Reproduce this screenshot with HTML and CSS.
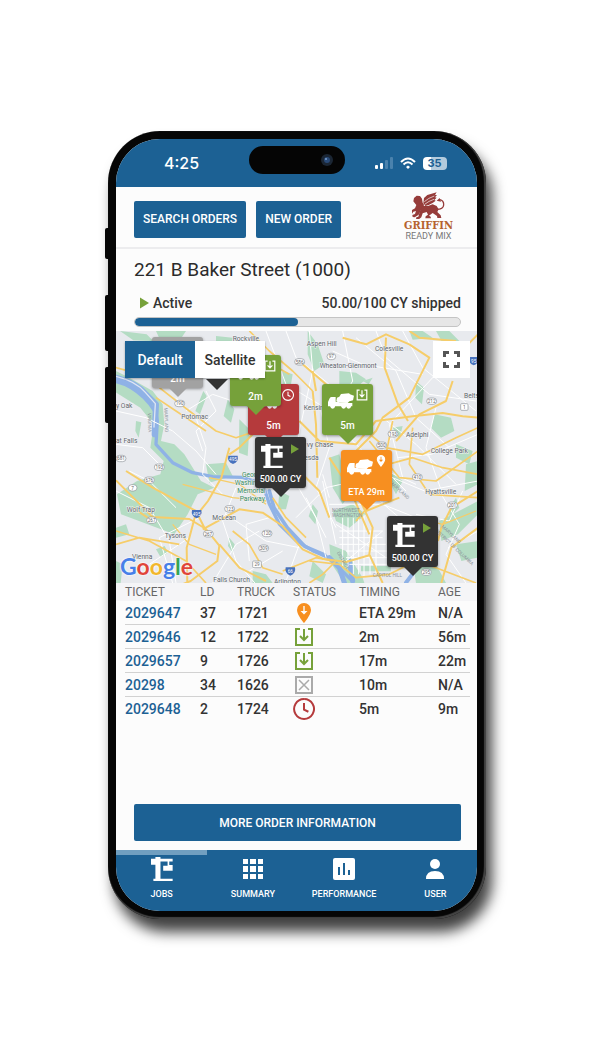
FILE: index.html
```html
<!doctype html>
<html lang="en">
    <head>
        <meta charset="UTF-8" />
        <meta name="viewport" content="width=device-width, initial-scale=1" />
        <title>Griffin Ready Mix - Order</title>
        <link rel="stylesheet" href="styles.css">
    </head>
    <body>
        <!-- Shared icons -->
        <svg class="icon-defs" aria-hidden="true">
            <symbol id="truck" viewBox="0 0 78 46">
                <path d="M0 38V26l5-11q2-4 6-4h12v14h8l4 4h38v10H0z" />
                <path d="M27 13l7-3 5-8 24-2 3 3 12 4-3 14-11 3-5 5-28-1-6-6z" />
                <circle cx="14" cy="39" r="7" />
                <circle cx="47" cy="39" r="7" />
                <circle cx="62" cy="39" r="7" />
            </symbol>
            <symbol id="crane" viewBox="0 0 65 71">
                <path d="M13 0h15v5h36v8H28v51h36v7H7v-7h6V23H0V5h13z" />
                <path d="M49 12h5v12h10v17H36V26h13z" />
            </symbol>
            <symbol id="unload" viewBox="0 0 20 20">
                <path d="M6 2H2v16h16V2h-4M10 2v11M6 9l4 4 4-4" fill="none" stroke="currentColor" stroke-width="2" />
            </symbol>
            <symbol id="clock" viewBox="0 0 20 20">
                <path d="M10 1a9 9 0 1 0 .1 0M10 4.500v6l4 2" fill="none" stroke="currentColor" stroke-width="1.800" />
            </symbol>
            <symbol id="place" viewBox="0 0 20 20">
                <path fill-rule="evenodd" d="M10 0a7 7 0 0 1 7 7c0 5-7 13-7 13S3 12 3 7a7 7 0 0 1 7-7zM9.300 3v5H6.500l3.500 3.500L13.500 8h-2.800V3z" />
            </symbol>
            <symbol id="play" viewBox="0 0 10 12">
                <path d="M0 0l10 6-10 6z" />
            </symbol>
        </svg>

        <main class="phone">
            <span class="side-key key-action"></span>
            <span class="side-key key-up"></span>
            <span class="side-key key-down"></span>
            <div class="screen">
                <div class="status-bar">
                    <span class="time">4:25</span>
                    <span class="island">
                        <svg width="14" height="14" viewBox="0 0 14 14">
                            <circle cx="7" cy="7" r="6" fill="#1b2634" />
                            <circle cx="7" cy="7" r="3" fill="#294a78" />
                            <circle cx="6" cy="6" r="1" fill="#7da0cc" />
                        </svg>
                    </span>
                    <span class="indicators">
                        <svg width="18" height="12" viewBox="0 0 18 12">
                            <rect x="0" y="8" width="3" height="4" rx="1" fill="#fff" />
                            <rect x="5" y="6" width="3" height="6" rx="1" fill="#fff" />
                            <rect x="10" y="3" width="3" height="9" rx="1" fill="#4a82ad" />
                            <rect x="15" y="0" width="3" height="12" rx="1" fill="#4a82ad" />
                        </svg>
                        <svg width="16" height="12" viewBox="0 0 16 12" fill="none" stroke="#fff" stroke-width="2">
                            <path d="M1 5q7-7 14 0M3.500 7.500q4.500-4.500 9 0" />
                            <path d="M8 8.500l2 1.500-2 2-2-2z" fill="#fff" stroke="none" />
                        </svg>
                        <span class="battery">35</span>
                    </span>
                </div>

                <header class="toolbar">
                    <button class="btn">SEARCH ORDERS</button>
                    <button class="btn">NEW ORDER</button>
                    <div class="brand">
                        <svg width="33" height="27" viewBox="0 0 99 81" fill="#963c3a">
                            <path d="M4 28l2-10 8-7 10 1 6 8 2 12 4 6-2 10-8 8-6 12-12 8-6-1-1-6 8-3 3-9-8 2-5 8-5-3 3-8 12-7 4-10-5-6z" />
                            <path d="M34 34l2-16 10-9 28-8-5 8h6l-6 7 5 1-7 7 4 2-8 6-13 7-10 3z" />
                            <path d="M32 42l16 0 14-5 12 5 6 10-4 8 10 10 2 8H76l-1-6-13-9-11 8 5 3 1 5H40l1-6 7-5-4-8-12 4-4 12-9 7-7-1 1-6 6-2 4-14z" />
                            <path d="M74 52q20 0 21-13T83 23" stroke="#963c3a" stroke-width="4" fill="none" />
                            <path d="M74 26l9-8 4 11z" />
                            <path d="M37 29q12-11 30-17M38 37q12-10 28-15" stroke="#fcfcfc" stroke-width="2" fill="none" />
                        </svg>
                        <span class="brand-name">GRIFFIN</span>
                        <span class="brand-sub">READY MIX</span>
                    </div>
                </header>

                <section class="order">
                    <h1>221 B Baker Street (1000)</h1>
                    <div class="order-state">
                        <span class="active"><svg class="play" width="9" height="12"><use href="#play" /></svg>Active</span>
                        <span>50.00/100 CY shipped</span>
                    </div>
                    <div class="progress"><div class="progress-fill" style="width: 50%"></div></div>
                </section>

                <section class="map">
                    <svg class="map-canvas" viewBox="0 0 1086 756" preserveAspectRatio="xMinYMin slice">
                        <rect width="1300" height="756" fill="#e8eaee" />
                        <!-- Parks -->
                        <g fill="#b4dcc3">
                            <path d="M0 120l40 20 70 40 30 40 5 60-10 50 40 10 30 30 50 80 40 20-50 20-30 60-40 60-80-30-80-30-12-60 60-40 70-20 10-40-40-40 10-70-40-50-80-50z" />
                            <path d="M12 0l80 10 20 20-60-2zM120 0h90l-20 30-60-8zM300 15l50 5-10 60-40-30zM500 120l30 10-10 60-20-20zM575 0l30 40 20 60-30 20-20-50zM670 120l50 5 30 20-30 25-50-10z" />
                            <path d="M335 205l20 30-10 40-22-20zM370 265l30 30-5 80-26-10zM262 180l10 15-20 55-14-10zM270 400l60-5 20 40-70 20z" />
                            <path d="M640 380l30-10 30 120-20 30-30-50zM650 540l60-20 40 30-50 40-40-20zM490 480l30 15-10 40-24 0zM590 520l16 20-8 40-20-24z" />
                            <path d="M955 250l50 10 10 40-40 20-30-30zM1020 340l50 20-10 40-40-20zM830 290l30-5-10 40zM820 420l40 30-20 40-16-30zM880 0l40 0 30 20-60 6zM960 0h40l30 30-50 6zM900 150l24 20-6 50-20-20z" />
                            <path d="M1050 400l36-10v70l-40 20zM970 570l40-20 76-40v40l-60 60-50 20zM1020 640l66-10v50l-50 10zM640 640l50 20 50 80 5 16h-60l-40-60zM735 705h90v16h-90zM110 540l40 10 30-10-10 20zM120 655l26-10 10 20-22 14zM340 620l16 20-6 25-14-20zM890 690l60-10 40 76h-90zM0 590l30-10 10 30-40 10zM60 270l16 4-8 46-10-20zM0 690l20 10-6 56H0z" />
                            <path d="M590 690l40 40-10 26-40-20zM410 720l40 10 20 26h-60zM1000 560l30-30-10-30-20 30zM740 150l30-10-12 20zM620 200l30-10 0 40-24-10z" />
                        </g>
                        <!-- River -->
                        <g fill="none" stroke="#8fb2e6" stroke-linejoin="round" stroke-linecap="round">
                            <path d="M-6 150q50 10 90 50t40 70l-4 70 50 55 60 30 60 12 90 2 60 20 20 60 30 60 50 50 50 30 50 22 40 40 30 30" stroke-width="10" />
                            <path d="M0 140q60 15 90 50l30 30-4 90" stroke-width="18" />
                            <path d="M0 136q60 15 88 48l30 34-4 70" stroke="#dfe6f3" stroke-width="4" />
                            <path d="M460 480l14 50 40 60 52 56 60 26" stroke-width="11" />
                            <path d="M640 680l30 30 20 60M700 690l10 60" stroke-width="15" />
                            <path d="M690 240l8 14M900 715l-30 40" stroke-width="12" />
                        </g>
                        <!-- Streets -->
                        <g fill="none" stroke="#fff" stroke-width="3">
                            <path d="M0 240l90 20 80 40 70 60 60 70M180 200l60 60 30 90-10 80 60 60M40 420l60 30 80 80M0 480l100 50 60 100 20 126M270 180l30 60-60 60 20 60M210 240l80-50 90 30M0 340l80 10 60 60" />
                            <path d="M510 0l30 80 100 80 60 160 90 90 110 50M450 0l60 160 100 60 30 130-40 120 60 120M580 0l10 120-40 180-20 140 70 120 30 120M650 60l90 40 180 30M680 0l30 150-60 100M720 20l120 100 60 140 100 90" />
                            <path d="M780 0l30 80 130 110 140 20M860 0l60 110 160 130M1000 40l-50 100-130 140 40 160M800 260l100 80 120 120M840 300l-60 90 90 90M1086 310l-140 60-100 10M1086 450l-160 30-120-50M960 230l-30 120 50 140" />
                            <path d="M570 500l60 120M620 450l40 190M540 560l90-90 90-20M360 470l-40 100 40 120 60 70M430 600l-70 40-70 116M330 550l120 80 100 20M250 560l-120 60 40 136M220 620l-120 80M460 560l-70 20 10 110M500 660l-100 60M550 640l-40 110" />
                            <path d="M680 560v150M696 560v150M712 560v170M728 560v170M744 550v190M762 600v130M780 610v120M670 600h130M670 620h130M670 640h140M690 660h130M690 680h130M700 700h130M660 580l150 100M800 600l-110 90" />
                            <path d="M970 480l60 100-40 90 60 86M1040 480l-40 90-100-20M900 560l-100-40-20-90M1086 600l-90 50M780 500l70 60M640 520h160M640 500l-20-70" />
                        </g>
                        <!-- Highways -->
                        <g fill="none" stroke="#f6cd69" stroke-width="6" stroke-linejoin="round">
                            <path d="M-6 108l50 14M130 170l90 70 80 60 60 20 60-20M400 0l60 60 70 60 60 60M350 50l100 40 70 40M270 300l-90-60-60-40" stroke-width="5" />
                            <path d="M340 350l-24 90-40 70-40 50-24 90 2 110M0 448l60 60 50 50 110 6 50 30 40 50-6 46-80 60-50 20M30 420l80 50 130 70 30 60M50 530l60 40" />
                            <path d="M310 640l60 70 80 40M260 595l110-60 70 10 60 40 60 70 60 28 70 10 70-20M420 300l-50 50-30 20" />
                            <path d="M550 270l60 60 110 10 60-70 110-14 90-10 60 10 46 4M590 180l10 100 4 160M590 120l10 60M560 100l70 60 30 80" />
                            <path d="M680 20l70 20 60-30 70 30 60 40-60 120-80 60-20 40-60 60-20 40M880 0l30 20 110 10M810 20l-4 90 40 110 30 50M1010 150l-20 60-80 40-70 80M1086 10l-100 100" />
                            <path d="M750 300l60 50 110 20 100-50 66-30M780 410l110-30 90 30 106 20M830 270l-20 100-30 130-60 70M890 290l-10 110 60 90 146 10M760 330l90 110 110 10 126-90" stroke-width="5" />
                            <path d="M1086 480l-80 50-30 60-10 40M1086 590l-80 60-30 106M720 480l50 110-10 80 40 86M640 380l60 90 60 140M750 540l100-40M550 420l60 60 30 80" />
                            <path d="M580 690l90 10 50 40 100-10 80-40 60 20 120 46M660 690l-40 40-40 26M350 600l50 40 40 70 60 20M0 600l100 30 110 60 60 66M0 640l70-20 120 20M470 500l40 60 60 60M500 720l100-40 50 10" stroke-width="5" />
                            <path d="M280 440l90 20 80 60M200 460l150 40 100 10M170 580l50 60 80 30M840 590l60-30 80 20 100-40" stroke-width="4" />
                        </g>
                        <!-- Route shields -->
                        <g class="shields">
                            <rect x="176" y="208" width="30" height="19" rx="10" /><text x="191" y="223">190</text>
                            <rect x="115" y="399" width="30" height="19" rx="10" /><text x="130" y="414">193</text>
                            <rect x="85" y="438" width="30" height="19" rx="10" /><text x="100" y="453">676</text>
                            <rect x="37" y="461" width="26" height="19" rx="10" /><text x="50" y="476">7</text>
                            <rect x="0" y="373" width="30" height="19" rx="10" /><text x="15" y="388">681</text>
                            <rect x="92" y="558" width="30" height="19" rx="10" /><text x="107" y="573">267</text>
                            <rect x="262" y="599" width="30" height="19" rx="10" /><text x="277" y="614">267</text>
                            <rect x="326" y="524" width="30" height="19" rx="10" /><text x="341" y="539">123</text>
                            <rect x="438" y="598" width="30" height="19" rx="10" /><text x="453" y="613">120</text>
                            <rect x="428" y="642" width="30" height="19" rx="10" /><text x="443" y="657">309</text>
                            <rect x="410" y="690" width="26" height="20" rx="3" /><text x="423" y="706">29</text>
                            <rect x="536" y="83" width="30" height="19" rx="10" /><text x="551" y="98">586</text>
                            <rect x="633" y="67" width="26" height="19" rx="10" /><text x="646" y="82">97</text>
                            <rect x="932" y="201" width="30" height="19" rx="10" /><text x="947" y="216">212</text>
                            <rect x="1034" y="218" width="22" height="20" rx="3" /><text x="1045" y="234">1</text>
                            <rect x="816" y="299" width="30" height="19" rx="10" /><text x="831" y="314">193</text>
                            <rect x="782" y="333" width="30" height="19" rx="10" /><text x="797" y="348">500</text>
                            <rect x="889" y="429" width="30" height="19" rx="10" /><text x="904" y="444">410</text>
                            <rect x="994" y="513" width="30" height="19" rx="10" /><text x="1009" y="528">201</text>
                            <rect x="916" y="714" width="30" height="19" rx="10" /><text x="931" y="729">295</text>
                        </g>
                        <g class="interstates">
                            <path d="M337 374h28q4 18-14 25-18-7-14-25z" /><text x="351" y="391">495</text>
                            <path d="M228 537h28q4 18-14 25-18-7-14-25z" /><text x="242" y="554">495</text>
                            <path d="M509 709h28q4 18-14 25-18-7-14-25z" /><text x="523" y="726">66</text>
                            <path d="M1059 78h28q4 18-14 25-18-7-14-25z" /><text x="1073" y="95">95</text>
                        </g>
                        <!-- Place names -->
                        <g class="places">
                            <text x="350" y="29">Rockville</text>
                            <text x="572" y="45">Aspen Hill</text>
                            <text x="777" y="60">Colesville</text>
                            <text x="611" y="112">Wheaton-Glenmont</text>
                            <text x="1044" y="202">Belts</text>
                            <text x="0" y="232">y Oak</text>
                            <text x="196" y="263">Potomac</text>
                            <text x="0" y="336">at Falls</text>
                            <text x="563" y="237">Kensington</text>
                            <text x="572" y="347">vy Chase</text>
                            <text x="524" y="386">Bethesda</text>
                            <text x="870" y="317">Adelphi</text>
                            <text x="944" y="367">College Park</text>
                            <text x="928" y="489">Hyattsville</text>
                            <text x="32" y="543">Wolf Trap</text>
                            <text x="146" y="622">Tysons</text>
                            <text x="289" y="567">McLean</text>
                            <text x="48" y="685">Vienna</text>
                            <text x="292" y="753">Falls Church</text>
                            <text x="474" y="760">Arlington</text>
                        </g>
                        <g class="places parkway">
                            <text x="378" y="437">George</text>
                            <text x="356" y="461">Washington</text>
                            <text x="364" y="485">Memorial</text>
                            <text x="371" y="509">Parkway</text>
                        </g>
                        <g class="regions">
                            <text x="648" y="543">NORTHWEST</text>
                            <text x="648" y="559">WASHINGTON</text>
                            <text x="770" y="737">CAPITOL HILL</text>
                            <text transform="translate(95 246) rotate(88)">VIRGINIA</text>
                            <text transform="translate(145 230) rotate(88)">MARYLAND</text>
                            <text transform="translate(820 455) rotate(43)">MARYLAND</text>
                            <text transform="translate(975 588) rotate(43)">MARYLAND</text>
                            <text transform="translate(956 600) rotate(43)">DISTRICT OF COLUMBIA</text>
                            <text transform="translate(662 665) rotate(60)">DISTRICT</text>
                        </g>
                    </svg>

                    <button class="pin pin-gray" style="left: 36px; top: 6px">
                        <svg class="pin-main" width="26" height="16"><use href="#truck" /></svg>
                        <span>2m</span>
                    </button>
                    <i class="tip-only"></i>
                    <button class="pin pin-red" style="left: 132px; top: 53px">
                        <svg class="pin-main" width="26" height="16"><use href="#truck" /></svg>
                        <svg class="pin-badge" width="12" height="12"><use href="#clock" /></svg>
                        <span>5m</span>
                    </button>
                    <button class="pin pin-green" style="left: 114px; top: 24px">
                        <svg class="pin-main" width="26" height="16"><use href="#truck" /></svg>
                        <svg class="pin-badge" width="12" height="12"><use href="#unload" /></svg>
                        <span>2m</span>
                    </button>
                    <button class="pin pin-green" style="left: 206px; top: 53px">
                        <svg class="pin-main" width="26" height="16"><use href="#truck" /></svg>
                        <svg class="pin-badge" width="12" height="12"><use href="#unload" /></svg>
                        <span>5m</span>
                    </button>
                    <button class="pin pin-dark" style="left: 139px; top: 106px">
                        <svg class="pin-main" width="22" height="24"><use href="#crane" /></svg>
                        <svg class="pin-badge play" width="8" height="10"><use href="#play" /></svg>
                        <span>500.00 CY</span>
                    </button>
                    <button class="pin pin-orange" style="left: 225px; top: 119px">
                        <svg class="pin-main" width="26" height="16"><use href="#truck" /></svg>
                        <svg class="pin-badge" width="12" height="12"><use href="#place" /></svg>
                        <span>ETA 29m</span>
                    </button>
                    <button class="pin pin-dark" style="left: 271px; top: 185px">
                        <svg class="pin-main" width="22" height="24"><use href="#crane" /></svg>
                        <svg class="pin-badge play" width="8" height="10"><use href="#play" /></svg>
                        <span>500.00 CY</span>
                    </button>

                    <div class="map-type">
                        <button class="selected">Default</button>
                        <button>Satellite</button>
                    </div>
                    <button class="fullscreen" aria-label="Toggle fullscreen">
                        <svg width="17" height="17" viewBox="0 0 17 17" fill="none" stroke="#555" stroke-width="3">
                            <path d="M1.500 6V1.500H6M11 1.500h4.500V6M15.500 11v4.500H11M6 15.500H1.500V11" />
                        </svg>
                    </button>
                    <div class="google"><span class="b">G</span><span class="r">o</span><span class="y">o</span><span class="b">g</span><span class="g">l</span><span class="r">e</span></div>
                </section>

                <div class="tickets">
                    <table>
                        <colgroup>
                            <col class="c-ticket"><col class="c-ld"><col class="c-truck"><col class="c-status"><col class="c-timing"><col>
                        </colgroup>
                        <thead>
                            <tr><th>TICKET</th><th>LD</th><th>TRUCK</th><th>STATUS</th><th>TIMING</th><th>AGE</th></tr>
                        </thead>
                        <tbody>
                            <tr>
                                <td><a href="#2029647">2029647</a></td><td>37</td><td>1721</td>
                                <td><svg class="status orange" width="22" height="20"><use href="#place" /></svg></td>
                                <td>ETA 29m</td><td>N/A</td>
                            </tr>
                            <tr>
                                <td><a href="#2029646">2029646</a></td><td>12</td><td>1722</td>
                                <td><svg class="status green" width="22" height="20"><use href="#unload" /></svg></td>
                                <td>2m</td><td>56m</td>
                            </tr>
                            <tr>
                                <td><a href="#2029657">2029657</a></td><td>9</td><td>1726</td>
                                <td><svg class="status green" width="22" height="20"><use href="#unload" /></svg></td>
                                <td>17m</td><td>22m</td>
                            </tr>
                            <tr>
                                <td><a href="#20298">20298</a></td><td>34</td><td>1626</td>
                                <td>
                                    <svg class="status" width="22" height="20" viewBox="0 0 20 20" fill="none" stroke="#aaa">
                                        <path d="M2 2h16v16H2z" stroke-width="2" />
                                        <path d="M5 5l10 10M15 5L5 15" stroke-width="1.500" />
                                    </svg>
                                </td>
                                <td>10m</td><td>N/A</td>
                            </tr>
                            <tr>
                                <td><a href="#2029648">2029648</a></td><td>2</td><td>1724</td>
                                <td><svg class="status red" width="22" height="22"><use href="#clock" /></svg></td>
                                <td>5m</td><td>9m</td>
                            </tr>
                        </tbody>
                    </table>
                </div>

                <div class="more">
                    <button class="btn">MORE ORDER INFORMATION</button>
                </div>

                <nav class="tabs">
                    <a class="tab current" href="#jobs">
                        <svg width="22" height="24" fill="#fff"><use href="#crane" /></svg>
                        JOBS
                    </a>
                    <a class="tab" href="#summary">
                        <svg width="20" height="24" viewBox="0 0 20 24" fill="#fff">
                            <path d="M0 2h5v5H0zM7 2h6v5H7zM15 2h5v5h-5zM0 9h5v6H0zM7 9h6v6H7zM15 9h5v6h-5zM0 17h5v5H0zM7 17h6v5H7zM15 17h5v5h-5z" />
                        </svg>
                        SUMMARY
                    </a>
                    <a class="tab" href="#performance">
                        <svg width="22" height="24" viewBox="0 0 22 24">
                            <rect y="1" width="22" height="22" rx="2" fill="#fff" />
                            <path d="M5 10h2v8H5zM10 6h2v12h-2zM15 13h2v5h-2z" fill="#1c6194" />
                        </svg>
                        PERFORMANCE
                    </a>
                    <a class="tab" href="#user">
                        <svg width="18" height="24" viewBox="0 0 18 24" fill="#fff">
                            <circle cx="9" cy="7" r="5" />
                            <path d="M0 22q0-8 9-8t9 8z" />
                        </svg>
                        USER
                    </a>
                </nav>
            </div>
        </main>
    </body>
</html>
```

FILE: styles.css
```css
* {
    box-sizing: border-box;
}
body {
    margin: 0;
    padding: 131px 105px 80px 108px;
    background-color: #fff;
    color: #333;
    font-family: Roboto, "Liberation Sans", sans-serif;
    font-size: 14px;
}
button {
    border: none;
    margin: 0;
    font-family: inherit;
    cursor: pointer;
}
svg {
    display: block;
}
.icon-defs {
    position: absolute;
    width: 0;
    height: 0;
}

/* Device */
.phone {
    position: relative;
    max-width: 430px;
    margin: 0 auto;
    padding: 8px 9px 8px 8px;
    background-color: #060606;
    border-radius: 52px;
    box-shadow: inset -1px -1px 1px 1px #444, 6px 13px 14px rgba(0, 0, 0, 0.75);
}
.side-key {
    position: absolute;
    left: -3px;
    width: 4px;
    height: 56px;
    background-color: #060606;
    border-radius: 2px 0 0 2px;
}
.key-action {
    top: 97px;
    height: 31px;
}
.key-up {
    top: 164px;
}
.key-down {
    top: 236px;
}
.screen {
    display: flex;
    flex-direction: column;
    min-height: 772px;
    overflow: hidden;
    background-color: #fcfcfc;
    border-radius: 44px;
}

.status-bar {
    display: grid;
    grid-template-columns: 1fr 96px 1fr;
    align-items: center;
    height: 48px;
    background-color: #1c6194;
    color: #fff;
}
.time {
    padding-left: 48px;
    font-family: Inter, sans-serif;
    font-size: 16px;
    font-weight: 500;
}
.island {
    display: flex;
    align-items: center;
    justify-content: flex-end;
    height: 28px;
    margin-bottom: 6px;
    padding-right: 11px;
    background-color: #050505;
    border-radius: 14px;
}
.indicators {
    display: flex;
    align-items: center;
    gap: 7px;
    padding-left: 30px;
}
.battery {
    width: 24px;
    height: 13px;
    background: linear-gradient(90deg, #fff 35%, #b3cbdd 35%);
    border-radius: 4px;
    color: #1c6194;
    font-family: Inter, sans-serif;
    font-size: 11px;
    font-weight: 700;
    line-height: 13px;
    text-align: center;
}

.toolbar {
    display: flex;
    align-items: center;
    gap: 10px;
    height: 62px;
    padding: 4px 24px 0 18px;
    border-bottom: 2px solid #ececee;
}
.btn {
    height: 37px;
    padding: 0 9px;
    background-color: #1c6194;
    border-radius: 2px;
    color: #fff;
    font-size: 12px;
    font-weight: 500;
}
.brand {
    display: flex;
    flex-direction: column;
    align-items: center;
    margin-left: auto;
    margin-top: -6px;
}
.brand-name {
    color: #b5632f;
    font-family: "DejaVu Serif Condensed", "DejaVu Serif", serif;
    font-size: 11px;
    font-weight: 700;
    line-height: 13px;
}
.brand-sub {
    color: #777;
    font-size: 9px;
    line-height: 9px;
}

.order {
    padding: 10px 16px 4px 18px;
}
h1 {
    margin: 0;
    color: #2b2b2b;
    font-size: 19px;
    font-weight: 400;
    line-height: 22px;
}
.order-state {
    display: flex;
    justify-content: space-between;
    margin-top: 13px;
    font-weight: 500;
    line-height: 18px;
}
.active {
    display: flex;
    align-items: center;
    gap: 4px;
    padding-left: 6px;
}
.play {
    color: #76a13a;
    fill: #76a13a;
}
.progress {
    height: 10px;
    margin-top: 5px;
    overflow: hidden;
    background-color: #e6e6e6;
    border: 1px solid #c4c4c4;
    border-radius: 5px;
}
.progress-fill {
    height: 100%;
    background-color: #1c6194;
    border-radius: 4px;
}

/* Map */
.map {
    position: relative;
    height: 252px;
    overflow: hidden;
}
.map-canvas {
    width: 100%;
    height: 100%;
}
.places {
    fill: #60656a;
    font-size: 20px;
    paint-order: stroke;
    stroke: #f3f4f6;
    stroke-width: 3px;
}
.parkway {
    fill: #388b5d;
}
.regions {
    fill: #8b929a;
    font-size: 14px;
}
.shields {
    fill: #fff;
    stroke: #8d9298;
    stroke-width: 2px;
}
.shields text,
.interstates text {
    fill: #666;
    stroke: none;
    font-size: 14px;
    text-anchor: middle;
}
.interstates {
    fill: #4872bd;
}
.interstates text {
    fill: #fff;
}
.pin {
    position: absolute;
    width: 51px;
    height: 51px;
    padding: 0;
    border-radius: 3px;
    box-shadow: 0 1px 3px rgba(0, 0, 0, 0.4);
    color: #fff;
    fill: #fff;
    font-size: 10px;
    font-weight: 500;
}
.pin::after,
.tip-only {
    content: "";
    position: absolute;
    top: 100%;
    left: 17px;
    border: 9px solid transparent;
    border-top-color: var(--pin);
    border-bottom: none;
}
.pin span {
    position: absolute;
    right: 0;
    bottom: 3px;
    left: 0;
    line-height: 12px;
    white-space: nowrap;
}
.pin-main {
    position: absolute;
    top: 9px;
    left: 6px;
}
.pin-dark .pin-main {
    top: 7px;
}
.pin-badge {
    position: absolute;
    top: 5px;
    right: 5px;
}
.pin-dark .pin-badge {
    top: 7px;
    right: 7px;
}
.pin-gray {
    --pin: #a2a2a2;
    background-color: #a2a2a2;
}
.pin-green {
    --pin: #76a13a;
    background-color: #76a13a;
}
.pin-red {
    --pin: #b53a3c;
    background-color: #b53a3c;
}
.pin-orange {
    --pin: #f78f20;
    background-color: #f78f20;
}
.pin-dark {
    --pin: #333;
    background-color: #333;
}
.pin-dark,
.pin-orange {
    font-size: 9px;
}
.tip-only {
    --pin: #333;
    top: 48px;
    left: 90px;
    border-width: 11px;
}
.map-type {
    position: absolute;
    top: 10px;
    left: 9px;
    display: flex;
    box-shadow: 0 1px 2px rgba(0, 0, 0, 0.3);
}
.map-type button {
    width: 70px;
    height: 37px;
    padding: 0;
    background-color: #fff;
    color: #333;
    font-size: 14px;
    font-weight: 500;
}
.map-type .selected {
    background-color: #1c6194;
    color: #fff;
}
.fullscreen {
    position: absolute;
    top: 10px;
    right: 7px;
    display: grid;
    place-items: center;
    width: 37px;
    height: 37px;
    background-color: #fff;
}
.google {
    position: absolute;
    bottom: 3px;
    left: 4px;
    font-family: Lato, sans-serif;
    font-size: 23px;
    font-weight: 700;
    line-height: 28px;
    text-shadow: 0 0 2px #fff, 0 0 2px #fff;
}
.b {
    color: #4780e8;
}
.r {
    color: #e0453a;
}
.y {
    color: #f2b72b;
}
.g {
    color: #37a455;
}

/* Tickets */
.tickets {
    flex: 1;
    padding: 0 7px 0 9px;
    background: linear-gradient(#f5f5f7 18px, #fcfcfc 18px);
}
table {
    width: 100%;
    table-layout: fixed;
    border-spacing: 0;
}
.c-ticket {
    width: 75px;
}
.c-ld {
    width: 37px;
}
.c-truck {
    width: 56px;
}
.c-status {
    width: 66px;
}
.c-timing {
    width: 79px;
}
th {
    height: 18px;
    padding: 0;
    color: #666;
    font-size: 12px;
    font-weight: 400;
    text-align: left;
}
td {
    height: 24px;
    padding: 0;
    border-bottom: 1px solid #d2d2d2;
    font-weight: 500;
    line-height: 18px;
    white-space: nowrap;
}
tr:last-child td {
    border-bottom: none;
}
td a {
    color: #1c6194;
    text-decoration: none;
}
.orange {
    fill: #f78f20;
}
.green {
    color: #76a13a;
}
.red {
    color: #b53a3c;
}

.more {
    padding: 0 16px 9px 18px;
}
.more .btn {
    width: 100%;
}
.tabs {
    display: grid;
    grid-template-columns: repeat(4, 1fr);
    height: 61px;
    margin-right: -4px;
    background-color: #1c6194;
}
.tab {
    display: flex;
    flex-direction: column;
    align-items: center;
    gap: 7px;
    padding-top: 2px;
    border-top: 5px solid transparent;
    color: #fff;
    font-size: 9px;
    font-weight: 500;
    line-height: 12px;
    text-decoration: none;
}
.current {
    border-top-color: #719fc0;
}
```
